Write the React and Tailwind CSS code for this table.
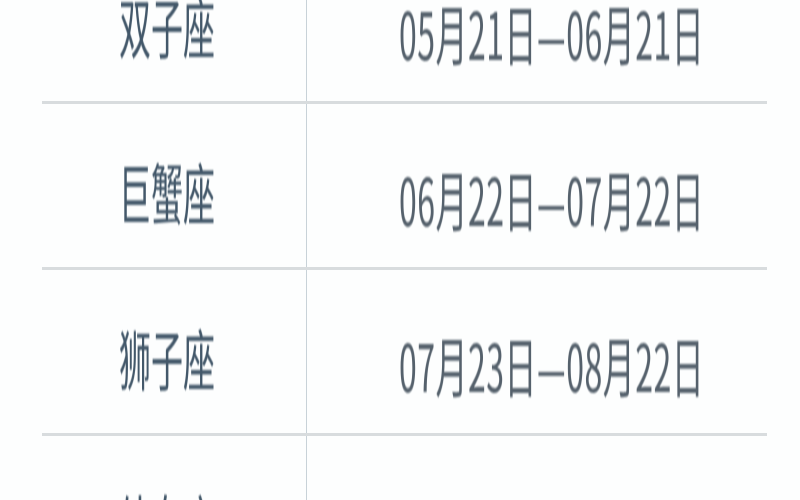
import React from "react";

const rows = [
  ["双子座", "05月21日—06月21日"],
  ["巨蟹座", "06月22日—07月22日"],
  ["狮子座", "07月23日—08月22日"],
  ["处女座", "08月23日—09月22日"],
];

export default function App() {
  return (
    <div
      className="w-[800px] h-[500px] overflow-hidden bg-[#fdfefe]"
      style={{ fontFamily: '"Noto Sans CJK SC", "Noto Sans", sans-serif' }}
    >
      <div className="ml-[42px] w-[725px] mt-[-62px]">
        {rows.map(([name, date]) => (
          <div key={name} className="flex h-[166px] border-b-[3px] border-[#d8dcde]">
            <div className="w-[265px] shrink-0 border-r border-[#c8d2d8] flex items-center pl-[77px]">
              <span className="text-[32px] leading-none text-[#43586a] scale-y-[2.05] translate-y-[4px] blur-[0.4px]">
                {name}
              </span>
            </div>
            <div className="flex-1 flex items-center pl-[92px]">
              <span className="text-[32px] leading-none tracking-[0.5px] text-[#55616c] scale-y-[2.05] translate-y-[11px] blur-[0.4px]">
                {date}
              </span>
            </div>
          </div>
        ))}
      </div>
    </div>
  );
}
